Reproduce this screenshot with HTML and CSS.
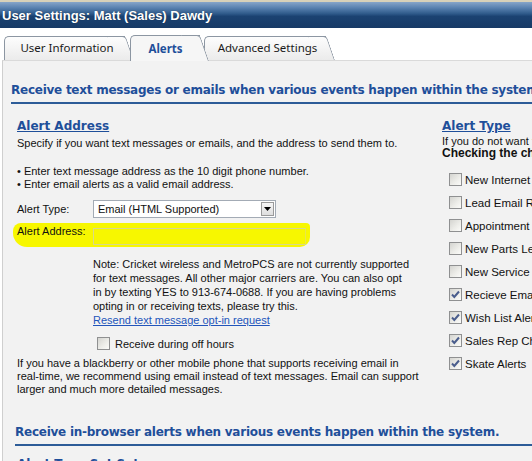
FILE: index.html
```html
<!DOCTYPE html>
<html>
<head>
<meta charset="utf-8">
<link rel="stylesheet" href="styles.css">
</head>
<body>
<div class="strip"></div>
<div class="titlebar">User Settings: Matt (Sales) Dawdy</div>
<div class="tabs">
  <div class="tab t1">User Information</div>
  <div class="tab t2 active">Alerts</div>
  <div class="tab t3">Advanced Settings</div>
</div>
<div class="panel">
  <h2 class="sect">Receive text messages or emails when various events happen within the system</h2>
  <div class="cols">
    <div class="left">
      <h3 class="sub">Alert Address</h3>
      <p class="txt">Specify if you want text messages or emails, and the address to send them to.</p>
      <p class="txt bullets">• Enter text message address as the 10 digit phone number.<br>• Enter email alerts as a valid email address.</p>
      <div class="row typerow">
        <span class="lbl">Alert Type:</span>
        <div class="select"><span class="seltext">Email (HTML Supported)</span><span class="selbtn"><svg width="7" height="4" viewBox="0 0 7 4"><path d="M0 0h7L3.5 4z" fill="#000"/></svg></span></div>
      </div>
      <div class="row addrrow">
        <span class="lbl">Alert Address:</span>
        <div class="addrinput"></div>
      </div>
      <p class="txt note">Note: Cricket wireless and MetroPCS are not currently supported<br>for text messages. All other major carriers are. You can also opt<br>in by texting YES to 913-674-0688. If you are having problems<br>opting in or receiving texts, please try this.</p>
      <a class="link" href="#">Resend text message opt-in request</a>
      <div class="cbrow offhours"><span class="cb"></span><span>Receive during off hours</span></div>
      <p class="txt bb">If you have a blackberry or other mobile phone that supports receiving email in<br>real-time, we recommend using email instead of text messages. Email can support<br>larger and much more detailed messages.</p>
    </div>
    <div class="right">
      <h3 class="sub">Alert Type</h3>
      <p class="txt nowrap">If you do not want to receive a certain type of alert, uncheck it below.</p>
      <p class="bold nowrap">Checking the checkbox will enable the alert.</p>
      <ul class="list">
        <li class="cbrow"><span class="cb"></span><span>New Internet Lead</span></li>
        <li class="cbrow"><span class="cb"></span><span>Lead Email Received</span></li>
        <li class="cbrow"><span class="cb"></span><span>Appointment Reminder</span></li>
        <li class="cbrow"><span class="cb"></span><span>New Parts Lead</span></li>
        <li class="cbrow"><span class="cb"></span><span>New Service Lead</span></li>
        <li class="cbrow"><span class="cb on"><svg width="9" height="9" viewBox="0 0 9 9"><path d="M1 4.5l2.3 2.4L8 1.5" fill="none" stroke="#4a5d8c" stroke-width="2"/></svg></span><span>Recieve Email Copies</span></li>
        <li class="cbrow"><span class="cb on"><svg width="9" height="9" viewBox="0 0 9 9"><path d="M1 4.5l2.3 2.4L8 1.5" fill="none" stroke="#4a5d8c" stroke-width="2"/></svg></span><span>Wish List Alerts</span></li>
        <li class="cbrow"><span class="cb on"><svg width="9" height="9" viewBox="0 0 9 9"><path d="M1 4.5l2.3 2.4L8 1.5" fill="none" stroke="#4a5d8c" stroke-width="2"/></svg></span><span>Sales Rep Change</span></li>
        <li class="cbrow"><span class="cb on"><svg width="9" height="9" viewBox="0 0 9 9"><path d="M1 4.5l2.3 2.4L8 1.5" fill="none" stroke="#4a5d8c" stroke-width="2"/></svg></span><span>Skate Alerts</span></li>
      </ul>
    </div>
  </div>
  <div class="sect2">
    <h2 class="sect">Receive in-browser alerts when various events happen within the system.</h2>
    <h3 class="sub under">Alert Type Set Setup</h3>
  </div>
</div>
</body>
</html>
```
FILE: styles.css
```css
html, body {
  margin: 0;
  padding: 0;
  background: #ffffff;
  overflow: hidden;
  width: 532px;
  height: 461px;
}
body {
  font-family: "Liberation Sans", Arial, sans-serif;
  font-size: 11px;
  color: #111;
}
.strip {
  height: 2px;
  background: #d8d1b9;
}
.titlebar {
  height: 26px;
  line-height: 27px;
  padding-left: 2px;
  color: #fff;
  font-weight: bold;
  font-size: 13px;
  background: linear-gradient(to bottom, #87a5c9 0%, #5a82b0 22%, #2f5a8a 45%, #1b4271 55%, #173a66 100%);
  text-shadow: 0 0 1px rgba(0,0,0,0.4);
  white-space: nowrap;
}
.tabs {
  display: flex;
  padding: 7px 0 0 4px;
  height: 25px;
  align-items: flex-end;
}
.tab {
  position: relative;
  height: 24px;
  box-sizing: border-box;
  line-height: 22px;
  text-align: center;
  font-family: "Noto Sans", "Open Sans", sans-serif;
  font-size: 11.5px;
  color: #1a1a1a;
  border: 1px solid #8c96a2;
  border-right: 0;
  border-bottom: 0;
  border-top-left-radius: 5px;
  background: linear-gradient(to bottom, #fdfdfd, #ebebeb);
}
.tab::after {
  content: "";
  position: absolute;
  top: -1px;
  bottom: 0;
  right: -9px;
  width: 18px;
  border-top: 1px solid #8c96a2;
  border-right: 1px solid #8c96a2;
  border-top-right-radius: 4px;
  background: linear-gradient(to bottom, #fdfdfd, #ebebeb);
  transform: skewX(19deg);
  transform-origin: 0 100%;
  z-index: -1;
}
.t1 { width: 121px; margin-right: 5px; z-index: 2; padding-left: 4px; }
.t2 { width: 70px; margin-right: 4px; z-index: 3; }
.t3 { width: 122px; z-index: 1; padding-left: 4px; }
.tab.active {
  height: 26px;
  margin-bottom: -1px;
  color: #1f4f9a;
  font-weight: bold;
  line-height: 25px;
  background: #f6f6f6;
}
.tab.active::after { background: #f6f6f6; }
.panel {
  background: #f2f2f2;
  border-top: 1px solid #dadada;
  border-left: 1px solid #cfcfcf;
  margin-left: 2px;
  padding: 21px 0 0 8px;
  height: 420px;
}
.sect {
  margin: 0;
  font-family: "DejaVu Sans", Verdana, sans-serif;
  font-size: 12px;
  font-weight: bold;
  color: #1f4f9a;
  line-height: 16px;
  letter-spacing: -0.25px;
  padding: 0 0 4px 0;
  border-bottom: 2px solid #2d5c98;
  white-space: nowrap;
}
.cols {
  display: flex;
  padding-left: 6px;
}
.left {
  width: 425px;
  flex: none;
}
.right {
  flex: none;
  white-space: nowrap;
}
.sub {
  margin: 14px 0 0 0;
  font-family: "DejaVu Sans", Verdana, sans-serif;
  font-size: 12px;
  font-weight: bold;
  color: #1f4f9a;
  text-decoration: underline;
  line-height: 16px;
}
.txt {
  margin: 3px 0 0 0;
  line-height: 13px;
}
.nowrap { white-space: nowrap; }
.bullets { margin-top: 15px; }
.row {
  display: flex;
  align-items: flex-start;
}
.lbl {
  width: 76px;
  flex: none;
}
.typerow {
  margin-top: 9px;
  align-items: center;
}
.select {
  width: 183px;
  height: 18px;
  box-sizing: border-box;
  border: 1px solid #a3abb5;
  background: #fff;
  display: flex;
  align-items: center;
  justify-content: space-between;
  padding: 0 1px 0 4px;
}
.selbtn {
  width: 13px;
  height: 14px;
  box-sizing: border-box;
  border: 1px solid #9a9a9a;
  background: linear-gradient(to bottom, #f6f6f6, #dedede);
  display: flex;
  align-items: center;
  justify-content: center;
}
.addrrow {
  margin-top: 5px;
  margin-left: -4px;
  padding: 5px 0 2px 4px;
  width: 293px;
  background: #f7f700;
  border-radius: 8px 4px 10px 14px;
}
.addrrow .lbl { line-height: 12px; margin-top: -3px; }
.addrinput {
  width: 213px;
  height: 17px;
  box-sizing: border-box;
  border: 1px solid #d9d98a;
  border-right-color: #e8e84a;
}
.note {
  margin: 10px 0 0 76px;
  line-height: 14px;
}
.link {
  display: block;
  margin: 0 0 0 76px;
  color: #2255bb;
  line-height: 14px;
}
.cbrow {
  display: flex;
  align-items: center;
  gap: 5px;
  height: 13px;
}
.offhours {
  margin: 10px 0 0 80px;
}
.cb {
  width: 13px;
  height: 13px;
  box-sizing: border-box;
  border: 1px solid #8f9091;
  background: linear-gradient(135deg, #d4d4d0 0%, #eeeeea 60%, #fbfbf9 100%);
  display: flex;
  align-items: center;
  justify-content: center;
  flex: none;
}
.bb {
  margin-top: 7px;
}
.right .txt { margin-top: 1px; line-height: 12px; }
.bold {
  margin: 0;
  font-weight: bold;
  font-size: 12px;
  line-height: 12px;
}
.list {
  list-style: none;
  margin: 14px 0 0 7px;
  padding: 0;
}
.list .cbrow {
  margin-bottom: 10px;
  font-size: 11.5px;
  gap: 3px;
}
.sect2 {
  margin-top: 28px;
  padding-left: 4px;
}
.under { margin-top: 10px; padding-left: 2px; }
```
